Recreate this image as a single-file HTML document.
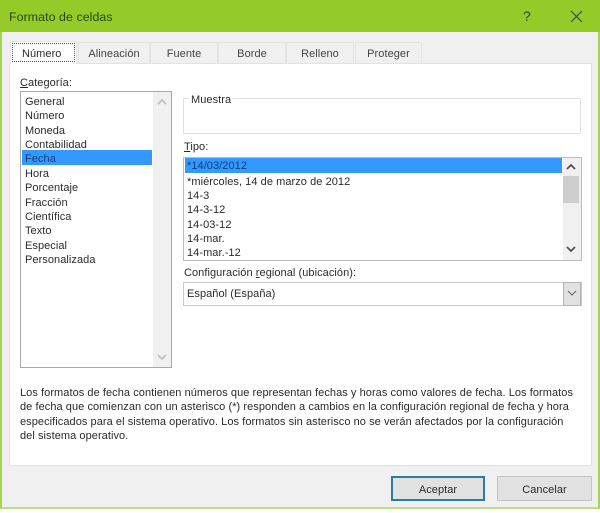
<!DOCTYPE html>
<html><head><meta charset="utf-8"><style>
html,body{margin:0;padding:0;background:#fff}
#w{position:relative;width:600px;height:513px;overflow:hidden;background:#fff;font-family:"Liberation Sans",sans-serif;font-size:11px;color:#2a2a2a;filter:blur(.35px)}
#w div{position:absolute;box-sizing:border-box}
.t{white-space:nowrap;line-height:14px;height:14px;letter-spacing:.06px}
.tab{background:#f0f0f0;border:1px solid #e4e4e4;border-bottom:none;top:42px;height:21px;text-align:center;line-height:23px;letter-spacing:.06px;color:#444}
u{text-decoration:underline}
</style></head><body><div id="w">
<div style="left:0;top:0;width:600px;height:32px;background:#94cb28"></div>
<div style="left:0;top:32px;width:600px;height:477px;background:#f0f0f0;border-left:2px solid #a5d44e;border-right:2px solid #a5d44e;border-bottom:2px solid #bcdc85"></div>
<div class="t" style="left:9px;top:9px;font-size:12.4px;height:16px;line-height:16px;color:#30421a">Formato de celdas</div>
<div class="t" style="left:523px;top:7px;font-size:14px;height:18px;line-height:18px;color:#30421a">?</div>
<svg style="position:absolute;left:569px;top:9px" width="14" height="14"><path d="M2 2L13 13M13 2L2 13" stroke="#3c4f22" stroke-width="1.2" fill="none"/></svg>

<div style="left:9px;top:63px;width:583px;height:403px;background:#fff;border:1px solid #e2e2e2"></div>
<div class="tab" style="left:10px;top:41px;width:67px;height:23px;background:#fff;color:#333"></div>
<div style="left:12px;top:43px;width:63px;height:19px;border:1px dotted #555"></div>
<div class="t" style="left:22px;top:47px">Número</div>
<div class="tab" style="left:78px;width:72px">Alineación</div>
<div class="tab" style="left:150px;width:68px">Fuente</div>
<div class="tab" style="left:218px;width:68px">Borde</div>
<div class="tab" style="left:286px;width:68px">Relleno</div>
<div class="tab" style="left:355px;width:67px">Proteger</div>

<div class="t" style="left:20px;top:76px"><u>C</u>ategoría:</div>
<div style="left:20px;top:91px;width:152px;height:277px;background:#fff;border:1px solid #a8a8a8"></div>
<div style="left:153px;top:92px;width:18px;height:275px;background:#f0f0f0"></div>
<svg style="position:absolute;left:155px;top:96px" width="14" height="12"><path d="M3 8L7 4L11 8" stroke="#c4c4c4" stroke-width="2" fill="none"/></svg>
<svg style="position:absolute;left:155px;top:351px" width="14" height="12"><path d="M3 4L7 8L11 4" stroke="#c4c4c4" stroke-width="2" fill="none"/></svg>
<div style="left:22px;top:150px;width:130px;height:15px;background:#3399ff"></div>
<div class="t" style="left:25px;top:95px">General</div>
<div class="t" style="left:25px;top:109px">Número</div>
<div class="t" style="left:25px;top:124px">Moneda</div>
<div class="t" style="left:25px;top:138px">Contabilidad</div>
<div class="t" style="left:25px;top:152px;color:#123f78">Fecha</div>
<div class="t" style="left:25px;top:167px">Hora</div>
<div class="t" style="left:25px;top:181px">Porcentaje</div>
<div class="t" style="left:25px;top:196px">Fracción</div>
<div class="t" style="left:25px;top:210px">Científica</div>
<div class="t" style="left:25px;top:224px">Texto</div>
<div class="t" style="left:25px;top:239px">Especial</div>
<div class="t" style="left:25px;top:253px">Personalizada</div>

<div style="left:183px;top:98px;width:398px;height:36px;border:1px solid #e2e2e2"></div>
<div class="t" style="left:189px;top:93px;background:#fff;padding:0 2px;height:13px;line-height:14px">Muestra</div>

<div class="t" style="left:184px;top:140px"><u>T</u>ipo:</div>
<div style="left:183px;top:157px;width:399px;height:104px;background:#fff;border:1px solid #bcbcbc"></div>
<div style="left:185px;top:158px;width:377px;height:15px;background:#3399ff"></div>
<div style="left:563px;top:158px;width:18px;height:102px;background:#f0f0f0"></div>
<div style="left:563px;top:176px;width:16px;height:27px;background:#cdcdcd"></div>
<svg style="position:absolute;left:564px;top:161px" width="14" height="12"><path d="M3 8L7 4L11 8" stroke="#505050" stroke-width="1.8" fill="none"/></svg>
<svg style="position:absolute;left:564px;top:243px" width="14" height="12"><path d="M3 4L7 8L11 4" stroke="#505050" stroke-width="1.8" fill="none"/></svg>
<div class="t" style="left:187px;top:159px;color:#123f78">*14/03/2012</div>
<div class="t" style="left:187px;top:175px">*miércoles, 14 de marzo de 2012</div>
<div class="t" style="left:187px;top:189px">14-3</div>
<div class="t" style="left:187px;top:203px">14-3-12</div>
<div class="t" style="left:187px;top:218px">14-03-12</div>
<div class="t" style="left:187px;top:232px">14-mar.</div>
<div class="t" style="left:187px;top:246px">14-mar.-12</div>

<div class="t" style="left:184px;top:266px">Configuración <u>r</u>egional (ubicación):</div>
<div style="left:183px;top:282px;width:399px;height:24px;background:#fff;border:1px solid #c8c8c8"></div>
<div style="left:563px;top:282px;width:18px;height:24px;background:#e1e1e1;border:1px solid #b4b4b4"></div>
<svg style="position:absolute;left:565px;top:287px" width="14" height="12"><path d="M3 4L7 8L11 4" stroke="#707070" stroke-width="1.2" fill="none"/></svg>
<div class="t" style="left:187px;top:287px">Español (España)</div>

<div class="t" style="left:20px;top:386px">Los formatos de fecha contienen números que representan fechas y horas como valores de fecha. Los formatos</div>
<div class="t" style="left:20px;top:400px">de fecha que comienzan con un asterisco (*) responden a cambios en la configuración regional de fecha y hora</div>
<div class="t" style="left:20px;top:415px">especificados para el sistema operativo. Los formatos sin asterisco no se verán afectados por la configuración</div>
<div class="t" style="left:20px;top:429px">del sistema operativo.</div>

<div style="left:391px;top:476px;width:94px;height:25px;background:#e1e1e1;border:2px solid #2a7ba8;text-align:center;line-height:25px;letter-spacing:.06px">Aceptar</div>
<div style="left:497px;top:476px;width:95px;height:25px;background:#e1e1e1;border:1px solid #c4c4c4;text-align:center;line-height:27px;letter-spacing:.06px">Cancelar</div>
</div></body></html>
